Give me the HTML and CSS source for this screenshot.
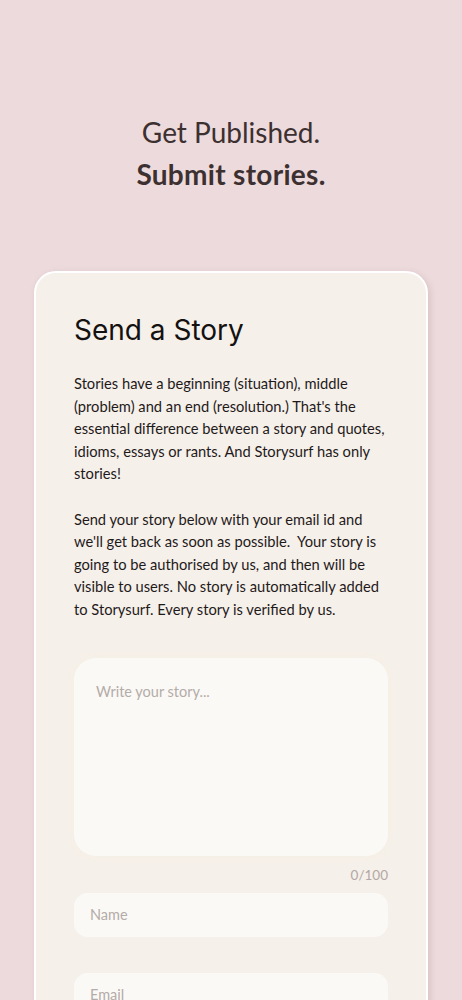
FILE: index.html
```html
<!DOCTYPE html>
<html lang="en">
<head>
<meta charset="utf-8">
<title>Submit stories</title>
<link rel="stylesheet" href="styles.css">
</head>
<body>
<header class="hero">
  <div class="hero-line">Get Published.</div>
  <div class="hero-line hero-bold">Submit stories.</div>
</header>
<main class="card">
  <h1 class="card-title">Send a Story</h1>
  <p class="card-text">Stories have a beginning (situation), middle (problem) and an end (resolution.) That's the essential difference between a story and quotes, idioms, essays or rants. And Storysurf has only stories!<br><br>Send your story below with your email id and we'll get back as soon as possible.&nbsp; Your story is going to be authorised by us, and then will be visible to users. No story is automatically added to Storysurf. Every story is verified by us.</p>
  <form class="form">
    <textarea class="story" placeholder="Write your story..."></textarea>
    <div class="counter">0/100</div>
    <input class="field" type="text" placeholder="Name">
    <input class="field field-email" type="email" placeholder="Email">
  </form>
</main>
</body>
</html>
```

FILE: styles.css
```css
* { box-sizing: border-box; }
html, body { margin: 0; padding: 0; }
body {
  background: #ecdadc;
  font-family: "Lato", "Noto Sans", sans-serif;
  color: #1f1a1a;
  width: 462px;
  overflow: hidden;
}
.hero {
  padding-top: 111px;
  text-align: center;
  font-size: 28px;
  line-height: 42px;
  color: #3d3030;
}
.hero-bold { font-weight: 700; letter-spacing: 0.3px; }
.card {
  margin: 76px 34px 0;
  border: 2px solid #ffffff;
  border-radius: 22px;
  background: #f6f0ea;
  padding: 39px 38px 60px;
  box-shadow: 2px 2px 6px rgba(160, 120, 125, 0.25);
}
.card-title {
  margin: 0;
  font-family: "Inter", "Roboto", sans-serif;
  font-weight: 400;
  font-size: 28px;
  line-height: 36px;
  color: #141111;
}
.card-text {
  margin: 24px 0 0;
  font-size: 14.7px;
  line-height: 22.6px;
  color: #1f1a1a;
}
.form {
  margin-top: 37px;
  display: flex;
  flex-direction: column;
}
.story {
  height: 198px;
  border: none;
  border-radius: 22px;
  background: #fbf9f6;
  padding: 25px 22px;
  font-family: "Lato", "Noto Sans", sans-serif;
  font-size: 14.5px;
  resize: none;
  outline: none;
  box-shadow: 0 0 6px rgba(245, 240, 225, 0.8);
}
.story::placeholder, .field::placeholder { color: #b3aca8; }
.counter {
  margin-top: 9px;
  text-align: right;
  font-size: 13.5px;
  line-height: 20px;
  color: #b0a8a5;
}
.field {
  margin-top: 8px;
  height: 44px;
  border: none;
  border-radius: 14px;
  background: #fbf9f6;
  padding: 0 16px;
  font-family: "Lato", "Noto Sans", sans-serif;
  font-size: 14.5px;
  outline: none;
}
.field-email { margin-top: 36px; }
```
